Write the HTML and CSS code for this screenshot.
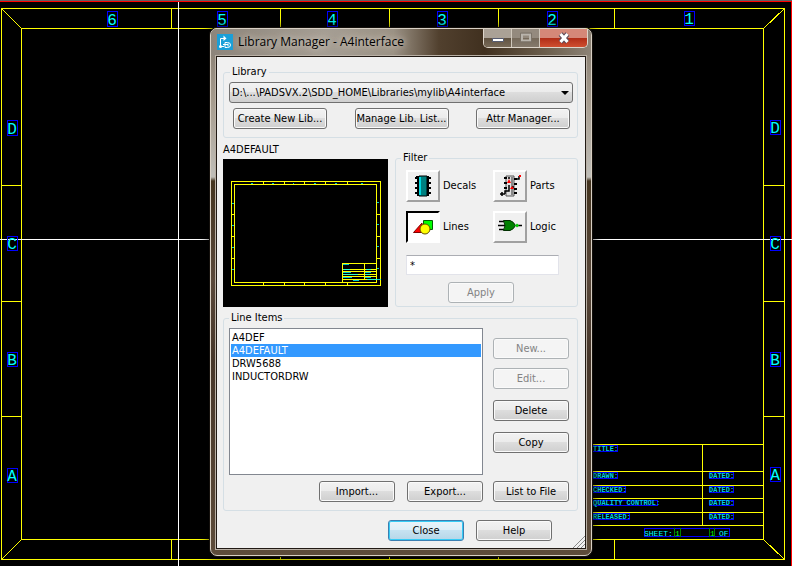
FILE: index.html
```html
<!DOCTYPE html>
<html lang="en">
<head>
<meta charset="utf-8">
<title>Library Manager - A4interface</title>
<link rel="stylesheet" href="styles.css">
</head>
<body>
<main class="workspace">
  <svg class="sheet" viewBox="0 0 792 566" aria-label="A4 drawing sheet">
    <path class="bounds-top" d="M0 .5H792"/>
    <path class="bounds" d="M0 1.5H791.5V566"/>
    <g class="frame">
      <path d="M1.500 8.500H784.500V559.500H1.500ZM21.500 28.500H763.500V539.500H21.500Z"/>
      <path d="M1.500 8.500L21.500 28.500M784.500 8.500L763.500 28.500M1.500 559.500L21.500 539.500M784.500 559.500L763.500 539.500"/>
      <path d="M171.500 8V28M280.500 8V28M389.500 8V28M498.500 8V28M614.500 8V28M171.500 540V560M280.500 540V560M389.500 540V560M498.500 540V560M614.500 540V560"/>
      <path d="M1 185.500H21M1 301.500H21M1 416.500H21M764 185.500H784M764 301.500H784M764 416.500H784"/>
      <path d="M580 444.500H763M580 471.500H763M580 485.500H763M580 498.500H763M580 512.500H763M580 525.500H763M702.500 444V525"/>
    </g>
    <path class="cross" d="M178.500 2V566M0 239.500H792"/>
    <g class="zone-box">
      <path d="M107.500 11.500h10v15h-10zM217.500 11.500h10v15h-10zM327.500 11.500h10v15h-10zM437.500 11.500h10v15h-10zM547.500 11.500h10v15h-10zM684.500 11.500h10v14h-10z"/>
      <path d="M7.500 120.500h10v15h-10zM7.500 236.500h10v14h-10zM7.500 352.500h10v14h-10zM7.500 468.500h10v14h-10z"/>
      <path d="M770.500 120.500h10v14h-10zM770.500 236.500h10v14h-10zM770.500 352.500h10v14h-10zM770.500 467.500h10v14h-10z"/>
      <path d="M580.500 445.500h37v6h-37zM580.500 472.500h37v6h-37zM580.500 486.500h45v6h-45zM580.500 500.500h77v5h-77zM580.500 513.500h49v6h-49z"/>
      <path d="M709.500 472.500h24v6h-24zM709.500 486.500h24v6h-24zM709.500 500.500h24v5h-24zM709.500 513.500h24v6h-24zM644.500 528.500h85v8h-85z"/>
    </g>
    <g class="zone">
      <text x="112" y="25">6</text><text x="222" y="25">5</text><text x="332" y="25">4</text><text x="442" y="25">3</text><text x="552" y="25">2</text><text x="689" y="24">1</text>
      <text x="12" y="134">D</text><text x="12" y="249">C</text><text x="12" y="365">B</text><text x="12" y="481">A</text>
      <text x="775" y="133">D</text><text x="775" y="249">C</text><text x="775" y="365">B</text><text x="775" y="480">A</text>
    </g>
    <g class="field">
      <text x="593" y="451">TITLE:</text><text x="593" y="478">DRAWN:</text><text x="593" y="492">CHECKED:</text><text x="593" y="505">QUALITY CONTROL:</text><text x="593" y="519">RELEASED:</text>
      <text x="709" y="478">DATED:</text><text x="709" y="492">DATED:</text><text x="709" y="505">DATED:</text><text x="709" y="519">DATED:</text>
    </g>
    <g class="sheet-no">
      <text x="644" y="536">SHEET:</text><text x="719" y="536">OF</text>
      <text class="green" x="675" y="536">1</text><text class="green" x="710" y="536">1</text>
      <path d="M674.500 528v9M680.500 528v9M709.500 528v9M714.500 528v9"/>
    </g>
  </svg>

  <section class="window" role="dialog" aria-labelledby="title">
    <header class="titlebar">
      <svg class="app-icon" viewBox="0 0 16 16" aria-hidden="true">
        <rect width="16" height="16" fill="#1a9fd8"/>
        <path d="M3.500 12V4.500H8" fill="none" stroke="#fff"/>
        <path d="M6.500 1.500L9.500 4.500L6.500 7V1.500" fill="#fff"/>
        <circle cx="3.500" cy="12.500" r="1.500" fill="#fff"/>
        <path d="M3 12.500H7M8 8.500H10.500Q13.500 8.500 13.500 11Q13.500 13.500 10.500 13.500H8ZM6 10.500H11M11 9.500V12.500" fill="none" stroke="#fff"/>
      </svg>
      <h1 id="title">Library Manager - A4interface</h1>
      <div class="caption">
        <button class="cap" aria-label="Minimize"><svg viewBox="0 0 12 12"><path d="M.5 6.500h11v3h-11z" fill="#fff" stroke="#555b70"/></svg></button>
        <button class="cap dim" aria-label="Maximize" disabled><svg viewBox="0 0 12 12"><path d="M2 2.500h8v6h-8z" fill="none" stroke="#b9b4ac" stroke-width="2"/><path d="M.5 1h11v9h-11z" fill="none" stroke="#7b7368"/></svg></button>
        <button class="cap exit" aria-label="Close window"><svg viewBox="0 0 12 12"><path d="M2.500 2L9.500 10M9.500 2L2.500 10" stroke="#5a4a58" stroke-width="5"/><path d="M2.500 2L9.500 10M9.500 2L2.500 10" stroke="#fff" stroke-width="3"/></svg></button>
      </div>
    </header>

    <form class="client">
      <fieldset class="library">
        <legend>Library</legend>
        <div class="combo">
          <select aria-label="Library"><option>D:\...\PADSVX.2\SDD_HOME\Libraries\mylib\A4interface</option></select>
        </div>
        <div class="library-actions">
          <button type="button">Create New Lib...</button>
          <button type="button">Manage Lib. List...</button>
          <button type="button">Attr Manager...</button>
        </div>
      </fieldset>

      <div class="middle">
        <figure class="preview">
          <figcaption>A4DEFAULT</figcaption>
          <svg viewBox="0 0 165 148" aria-label="Preview of A4DEFAULT">
            <g class="frame">
              <path d="M8.500 22.500H157.500V126.500H8.500ZM11.500 25.500H153.500V123.500H11.500Z"/>
              <path d="M40.500 22v3M61.500 22v3M81.500 22v3M102.500 22v3M124.500 22v3M40.500 124v3M61.500 124v3M81.500 124v3M102.500 124v3M124.500 124v3M8 55.500h3M8 77.500h3M8 99.500h3M154 55.500h3M154 77.500h3M154 99.500h3"/>
              <path d="M119.500 123V104.500H153M141.500 104v16M120 110.500h33M120 112.500h33M120 115.500h33M120 117.500h33M120 120.500h33"/>
            </g>
            <path class="marks" d="M28 24h2M49 24h2M70 24h1M91 24h2M112 24h2M138 24h2M9 44.500h2M9 66.500h2M9 88.500h2M9 110.500h2M154 43.500h2M154 65.500h2M154 87.500h2M154 109.500h2M120 105.500h6M120 110.500h7M120 113.500h8M120 115.500h15M120 118.500h9M143 110.500h5M142 113.500h6M142 115.500h5M142 118.500h6M130 121.500h6M144 120.500h14"/>
          </svg>
        </figure>

        <fieldset class="filter">
          <legend>Filter</legend>
          <div class="kinds">
            <div class="kind">
              <button type="button" class="tile" id="decals" aria-pressed="false"><svg viewBox="0 0 24 24"><path d="M7 2v20M17 2v20" stroke="#000" stroke-width="2"/><path d="M4 4h3M5 3h2M4 9h3M4 14h3M4 19h3M17 4h3M17 9h3M17 14h3M17 19h3" stroke="#000" stroke-width="2"/><path d="M8 2h8v20H8z" fill="#008080" stroke="#000"/><path d="M8 3h2v18H8z" fill="#00d8e0"/></svg></button>
              <label for="decals">Decals</label>
            </div>
            <div class="kind">
              <button type="button" class="tile" id="parts" aria-pressed="false"><svg viewBox="0 0 24 24"><path d="M8 2h8v20H8z" fill="#e0e0e0" stroke="#555"/><path d="M13 3h2v18h-2z" fill="#888"/><path d="M6 4h3M6 9h3M6 14h3M16 5h3M16 10h3M16 15h3M16 19h3" stroke="#000" stroke-width="2"/><path d="M2 20h5M4 18v4M7 20V17h4V11M11 5V3M14 13h2M17 5h4V2" fill="none" stroke="#000" stroke-width="1.500"/><path d="M9 9l2-4 2 4zM12 15l2-3 2 3zM21 1h2v2h-2z" fill="#f00"/></svg></button>
              <label for="parts">Parts</label>
            </div>
            <div class="kind">
              <button type="button" class="tile" id="lines" aria-pressed="true"><svg viewBox="0 0 24 24"><path d="M12.500 5.500h9v9h-9z" fill="#0f0" stroke="#006000"/><path d="M2.500 17.500L11 8v9.500z" fill="#f00" stroke="#800000"/><circle cx="14" cy="14" r="5" fill="#ff0" stroke="#605000"/></svg></button>
              <label for="lines">Lines</label>
            </div>
            <div class="kind">
              <button type="button" class="tile" id="logic" aria-pressed="false"><svg viewBox="0 0 24 24"><path d="M1 6.500h6M0 10.500h8M1 14.500h6M19 10.500h5" stroke="#000" stroke-width="1.500"/><path d="M5.500 5.500H12Q15.500 6.500 17.500 10.500Q15.500 14.500 12 15.500H5.500Q8.500 10.500 5.500 5.500z" fill="#008000" stroke="#003000"/><path d="M17 10.500l2-2 2 2-2 2z" fill="#0c0"/></svg></button>
              <label for="logic">Logic</label>
            </div>
          </div>
          <input type="text" value="*" aria-label="Filter pattern">
          <button type="button" class="apply" disabled>Apply</button>
        </fieldset>
      </div>

      <fieldset class="items">
        <legend>Line Items</legend>
        <select class="list" size="4" aria-label="Line Items">
          <option>A4DEF</option>
          <option selected>A4DEFAULT</option>
          <option>DRW5688</option>
          <option>INDUCTORDRW</option>
        </select>
        <div class="side">
          <button type="button" disabled>New...</button>
          <button type="button" disabled>Edit...</button>
          <button type="button" class="apart">Delete</button>
          <button type="button" class="apart">Copy</button>
        </div>
        <div class="files">
          <button type="button">Import...</button>
          <button type="button">Export...</button>
        </div>
        <button type="button">List to File</button>
      </fieldset>

      <footer class="actions">
        <button type="button" class="default">Close</button>
        <button type="button">Help</button>
      </footer>
      <svg class="grip" viewBox="0 0 12 12" aria-hidden="true"><path d="M0 12L12 0M4 12L12 4M8 12L12 8" stroke="#888"/></svg>
    </form>
  </section>
</main>
</body>
</html>
```
FILE: styles.css
```css
* { box-sizing: border-box; }

body {
  margin: 0;
  background: #000;
  font: 11px/14px "DejaVu Sans Condensed", "Noto Sans", sans-serif;
  color: #000;
}

.workspace {
  position: relative;
  min-height: 100vh;
  overflow: hidden;
}

.sheet {
  display: block;
  width: 100%;
  shape-rendering: crispEdges;
}

.bounds-top { stroke: #606060; }
.bounds { fill: none; stroke: #f00; }
.frame { fill: none; stroke: #ff0; shape-rendering: crispEdges; }
.cross { stroke: #fff; }
.zone-box { fill: none; stroke: #00f; }
.zone { font: 16px "Liberation Mono", monospace; fill: #0ff; text-anchor: middle; }
.field { font: bold 7px "Liberation Mono", monospace; fill: #00d0e0; }
.sheet-no { font: 8px "Liberation Mono", monospace; fill: #0ff; }
.sheet-no path { stroke: #008000; }
.sheet-no .green { fill: #0f0; }

.window {
  position: absolute;
  top: 28px;
  left: 210px;
  width: 382px;
  padding: 0 5px 6px;
  border: 1px solid #d8d0c4;
  border-radius: 7px;
  box-shadow: 0 0 0 1px #14100c, 0 0 8px 2px rgba(0, 0, 0, .7);
  background: linear-gradient(#81786c 0, #a59b8d 70px, #c0beb8 148px, #44341f 152px, #59483a 250px, #46362a 330px, #5d4c3a 100%);
}

.titlebar {
  display: flex;
  align-items: flex-start;
  gap: 5px;
  height: 27px;
  margin: 0 -5px;
  padding: 0 3px 0 6px;
  border-radius: 6px 6px 0 0;
  background: linear-gradient(90deg, #8d857b, #a59e94 30%, #9b9285 48%, #51402e 60%, #40301f 72%, #6b5e4c 88%, #8d8376);
}

.app-icon { width: 16px; height: 16px; margin-top: 5px; }

h1 {
  flex: 1;
  margin: 5px 0 0;
  font: 12px/16px "Open Sans", "Noto Sans", sans-serif;
  white-space: nowrap;
  text-shadow: 0 0 6px #cdc6bc, 0 0 8px #cdc6bc;
}

.caption {
  display: flex;
  height: 19px;
  border: 1px solid #ddd5ca;
  border-top: 0;
  border-radius: 0 0 5px 5px;
  overflow: hidden;
}

.cap {
  display: grid;
  place-items: center;
  width: 28px;
  padding: 0;
  border: 0;
  border-right: 1px solid #d0c8bc;
  background: linear-gradient(#aaa196 50%, #5f5140 50%, #786a58);
}
.cap svg { width: 12px; height: 12px; }
.cap.dim { background: linear-gradient(#948a7e 50%, #75695a 50%, #857a6c); }
.cap.exit { width: 47px; border-right: 0; background: linear-gradient(#d58878 48%, #b02c16 50%, #cf4f30); }

.client {
  position: relative;
  padding: 8px 7px 7px 6px;
  border: 1px solid #211a14;
  outline: 1px solid #b9b0a5;
  background: #f0f0f0;
}

fieldset {
  min-width: 0;
  margin: 0;
  border: 1px solid #d5dfe5;
  border-radius: 3px;
}
legend { padding: 0 2px; }

.client button:not(.tile) {
  height: 21px;
  padding: 0;
  border: 1px solid #707070;
  border-radius: 3px;
  background: linear-gradient(#f2f2f2, #ebebeb 49%, #dddddd 50%, #cfcfcf);
  box-shadow: inset 0 0 0 1px #fafafa;
  font: inherit;
  line-height: 19px;
  color: #000;
  white-space: nowrap;
}
.client button:not(.tile):disabled {
  border-color: #adb2b5;
  background: #f4f4f4;
  color: #838383;
}
.client button.default:not(.tile) {
  border-color: #3c7fb1;
  background: linear-gradient(#eaf4fa, #dceef8 49%, #c6e2f1 50%, #b5d6e8);
  box-shadow: inset 0 0 0 1px #35cbf5;
}

.library { padding: 3px 4px 8px 5px; }
.library legend { margin-left: 1px; }

.combo { position: relative; }
.combo::after {
  content: "";
  position: absolute;
  top: 9px;
  right: 4px;
  border: 4px solid transparent;
  border-top-color: #000;
  border-bottom: 0;
}
.combo select {
  appearance: none;
  display: block;
  width: 100%;
  height: 21px;
  padding: 0 2px;
  border: 1px solid #707070;
  border-radius: 3px;
  background: linear-gradient(#f2f2f2, #ebebeb 49%, #dddddd 50%, #cfcfcf);
  font: inherit;
  color: #000;
}

.library-actions {
  display: flex;
  justify-content: space-between;
  margin: 5px 3px 0 4px;
}
.library-actions button { width: 94px; }

.middle { display: flex; gap: 7px; margin-top: 5px; }

.preview { width: 165px; margin: 0; }
.preview figcaption { height: 16px; }
.preview svg { display: block; width: 100%; background: #000; }
.marks { stroke: #0ff; shape-rendering: crispEdges; opacity: .8; }

.filter { flex: 1; margin-top: 8px; padding: 5px 8px 3px 10px; }
.filter legend { margin-left: -5px; }

.kinds { display: grid; grid-template-columns: 87px 1fr; row-gap: 9px; }
.kind { display: flex; align-items: center; gap: 3px; }

.tile {
  display: grid;
  place-items: center;
  width: 34px;
  height: 32px;
  padding: 0;
  border: 2px solid;
  border-color: #fff #a0a0a0 #a0a0a0 #fff;
  background: #f0f0f0;
}
.tile svg { width: 24px; height: 24px; }
.tile[aria-pressed="true"] { border-color: #000 #fff #fff #000; background: #fff; }

.filter input {
  display: block;
  width: 153px;
  height: 20px;
  margin: 12px 0 7px;
  padding: 0 3px;
  border: 1px solid #e2e3ea;
  border-top-color: #abadb3;
  background: #fff;
  font: inherit;
}
.apply { display: block; width: 66px; margin-left: 42px; }

.items {
  display: grid;
  grid-template-columns: 1fr 76px;
  gap: 6px 10px;
  margin-top: 4px;
  padding: 3px 8px 8px 5px;
}
.list {
  height: 147px;
  padding: 2px 1px;
  border: 1px solid #828790;
  border-radius: 0;
  background: #fff;
  font: inherit;
  overflow: hidden;
}
.list option { height: 13px; min-height: 0; padding: 0 1px; line-height: 13px; color: #000; }
.list option:checked { background: #39f linear-gradient(#39f, #39f); color: #fff; }

.side { display: flex; flex-direction: column; gap: 9px; padding-top: 10px; }
.side .apart { margin-top: 2px; }
.files { display: flex; justify-content: flex-end; gap: 12px; }
.files button, .actions button { width: 76px; }

.actions {
  display: flex;
  justify-content: flex-end;
  gap: 12px;
  padding: 9px 26px 0 0;
}

.grip { position: absolute; right: 0; bottom: 0; width: 12px; height: 12px; }
```
